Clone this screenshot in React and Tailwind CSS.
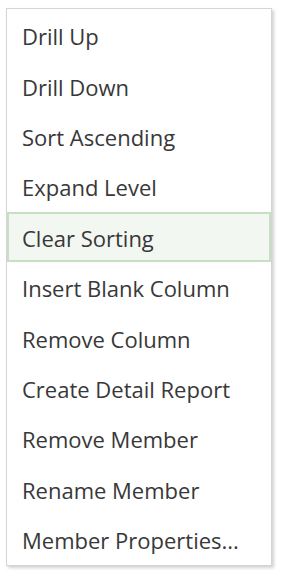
import React from "react";

const items = [
  "Drill Up",
  "Drill Down",
  "Sort Ascending",
  "Expand Level",
  "Clear Sorting",
  "Insert Blank Column",
  "Remove Column",
  "Create Detail Report",
  "Remove Member",
  "Rename Member",
  "Member Properties...",
];

const App = () => {
  return (
    <div className="w-[281px] h-[575px] bg-white pt-[8px] pl-[6px]" style={{ fontFamily: '"Open Sans", sans-serif' }}>
      <div className="w-[266px] border border-[#d4d4d4] bg-white py-[1px] shadow-[2px_2px_3px_rgba(0,0,0,0.18)]">
        {items.map((label) => (
          <div
            key={label}
            className={
              label === "Clear Sorting"
                ? "h-[50.4px] flex items-center pl-[13px] pt-[3px] text-[22px] text-[#383838] bg-[#f3f7f1] border-2 border-[#c7dfc2]"
                : "h-[50.4px] flex items-center pl-[15px] pt-[3px] text-[22px] text-[#383838]"
            }
          >
            {label}
          </div>
        ))}
      </div>
    </div>
  );
};

export default App;
